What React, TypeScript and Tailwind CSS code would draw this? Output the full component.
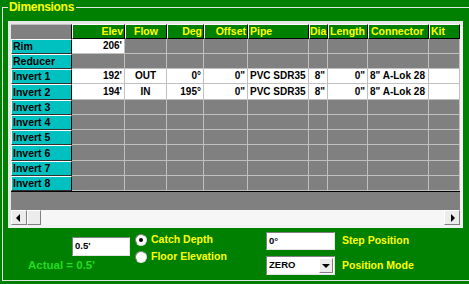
import React from "react";

const COLS =
  "grid grid-cols-[61px_53px_42px_37px_44px_61px_19px_40px_61px_31px]";

const headers = [
  { label: "Elev", align: "justify-end px-[1px]" },
  { label: "Flow", align: "justify-center px-[1px]" },
  { label: "Deg", align: "justify-end px-[1px]" },
  { label: "Offset", align: "justify-end px-[1px]" },
  { label: "Pipe", align: "justify-start px-[1px]" },
  { label: "Dia", align: "justify-start px-0" },
  { label: "Length", align: "justify-start px-[1px]" },
  { label: "Connector", align: "justify-start px-[2px]" },
  { label: "Kit", align: "justify-start px-[1px]" },
];

const cellAlign = [
  "justify-end",
  "justify-center",
  "justify-end",
  "justify-end",
  "justify-start",
  "justify-end",
  "justify-end",
  "justify-start",
  "justify-start",
];

const gray = Array(9).fill(null);
const invert = (elev: string, flow: string, deg: string) => [
  elev,
  flow,
  deg,
  '0"',
  "PVC SDR35",
  '8"',
  '0"',
  '8" A-Lok 28',
  "",
];

const rows: { label: string; h: string; cells: (string | null)[] }[] = [
  { label: "Rim", h: "h-[15px]", cells: ["206'", null, null, null, null, null, null, null, null] },
  { label: "Reducer", h: "h-[15px]", cells: gray },
  { label: "Invert 1", h: "h-[15px]", cells: invert("192'", "OUT", "0°") },
  { label: "Invert 2", h: "h-[16px]", cells: invert("194'", "IN", "195°") },
  { label: "Invert 3", h: "h-[15px]", cells: gray },
  { label: "Invert 4", h: "h-[15px]", cells: gray },
  { label: "Invert 5", h: "h-[15px]", cells: gray },
  { label: "Invert 6", h: "h-[16px]", cells: gray },
  { label: "Invert 7", h: "h-[15px]", cells: gray },
  { label: "Invert 8", h: "h-[15px]", cells: gray },
];

const Arrow = ({ dir }: { dir: "left" | "right" | "down" }) => (
  <svg width="8" height="8" viewBox="0 0 8 8">
    {dir === "left" && <polygon points="5,0 5,8 1,4" fill="#000" />}
    {dir === "right" && <polygon points="3,0 3,8 7,4" fill="#000" />}
    {dir === "down" && <polygon points="0,2 8,2 4,6" fill="#000" />}
  </svg>
);

const raised =
  "border border-t-white border-l-white border-r-[#808080] border-b-[#808080] bg-[#ececec]";
const sunken =
  "border border-t-[#808080] border-l-[#808080] border-r-[#e4e4e4] border-b-[#e4e4e4] bg-white";

const Grid = () => (
  <div className="w-[455px] h-[207px] border-[3px] border-t-[#e6e6e6] border-l-[#e6e6e6] border-r-[#f2f2f2] border-b-[#f2f2f2] bg-[#808080] flex flex-col">
    {/* header */}
    <div className={`${COLS} h-[15px]`}>
      <div className="bg-[#808080] border-r border-black border-t border-t-[#c0c0c0]" />
      {headers.map((c) => (
        <div
          key={c.label}
          className={`flex items-center ${c.align} bg-[#008000] border border-t-white border-l-white border-r-black border-b-black text-[10.5px] font-bold text-[#ffff00] leading-none whitespace-nowrap overflow-hidden`}
        >
          {c.label}
        </div>
      ))}
    </div>
    {rows.map((r) => (
      <div key={r.label} className={`${COLS} ${r.h}`}>
        <div className="flex items-center px-[1px] bg-[#00c0c0] border border-t-white border-l-white border-b-[#303030] border-r-black text-[10.5px] font-bold text-black leading-none whitespace-nowrap">
          {r.label}
        </div>
        {r.cells.map((v, i) => (
          <div
            key={i}
            className={`flex items-center ${cellAlign[i]} px-[2px] border-r border-b border-[#c0c0c0] text-[10px] font-bold text-black leading-none whitespace-nowrap overflow-hidden ${
              v === null ? "bg-[#808080]" : "bg-white"
            }`}
          >
            {v}
          </div>
        ))}
      </div>
    ))}
    <div className="h-[1px] bg-black" />
    <div className="h-[18px] bg-[#808080]" />
    {/* horizontal scrollbar */}
    <div className="h-[15px] flex bg-[#f6f6f6]">
      <div className={`w-[16px] flex items-center justify-center ${raised}`}>
        <Arrow dir="left" />
      </div>
      <div className={`w-[14px] ${raised}`} />
      <div className="flex-1" />
      <div className={`w-[16px] flex items-center justify-center ${raised}`}>
        <Arrow dir="right" />
      </div>
    </div>
  </div>
);

const Radio = ({ checked, label }: { checked?: boolean; label: string }) => (
  <div className="h-[17px] flex items-center">
    <div className="w-[12px] h-[12px] rounded-full bg-white border border-t-[#808080] border-l-[#808080] border-r-[#e0e0e0] border-b-[#e0e0e0] flex items-center justify-center">
      {checked && <div className="w-[4px] h-[4px] rounded-full bg-black" />}
    </div>
    <span className="ml-[4px] text-[10.5px] font-bold text-[#ffff00] leading-none">
      {label}
    </span>
  </div>
);

export default function App() {
  return (
    <div className="w-[469px] h-[284px] bg-[#008000] overflow-hidden font-['Liberation_Sans',Arial,sans-serif]">
      <div className="ml-[2px] h-[281px] flex flex-col">
        {/* group box caption row */}
        <div className="h-[14px] flex items-start">
          <div className="w-[6px] h-[7px] mt-[7px] border-l border-t border-[#e4e4e4]" />
          <span className="pl-[1px] pr-[2px] text-[12px] tracking-[-0.3px] leading-[14px] font-bold text-[#ffff00]">
            Dimensions
          </span>
          <div className="flex-1 h-[7px] mt-[7px] border-t border-[#e4e4e4]" />
        </div>
        <div className="flex-1 border-l border-b border-[#e4e4e4] px-[5px] pt-[7px]">
          <Grid />
          <div className="flex">
            <div className="w-[127px] flex flex-col">
              <div
                className={`ml-[64px] mt-[9px] w-[58px] h-[19px] flex items-center px-[2px] text-[9.5px] font-bold text-black ${sunken}`}
              >
                0.5'
              </div>
              <div className="ml-[20px] mt-[2px] text-[11.5px] leading-[14px] font-bold text-[#22dd22]">
                Actual = 0.5'
              </div>
            </div>
            <div className="w-[131px] pt-[3px] flex flex-col">
              <Radio checked label="Catch Depth" />
              <Radio label="Floor Elevation" />
            </div>
            <div className="flex flex-col">
              <div className="mt-[4px] flex items-center">
                <div
                  className={`w-[69px] h-[18px] flex items-center px-[2px] text-[9.5px] font-bold text-black ${sunken}`}
                >
                  0°
                </div>
                <span className="ml-[7px] text-[10.5px] font-bold text-[#ffff00]">
                  Step Position
                </span>
              </div>
              <div className="mt-[6px] flex items-center">
                <div
                  className={`w-[69px] h-[19px] flex items-center pl-[2px] pr-[1px] text-[9.5px] font-bold text-black ${sunken}`}
                >
                  <span className="flex-1">ZERO</span>
                  <div
                    className={`w-[14px] h-[15px] flex items-center justify-center ${raised}`}
                  >
                    <Arrow dir="down" />
                  </div>
                </div>
                <span className="ml-[7px] text-[10.5px] font-bold text-[#ffff00]">
                  Position Mode
                </span>
              </div>
            </div>
          </div>
        </div>
      </div>
    </div>
  );
}
